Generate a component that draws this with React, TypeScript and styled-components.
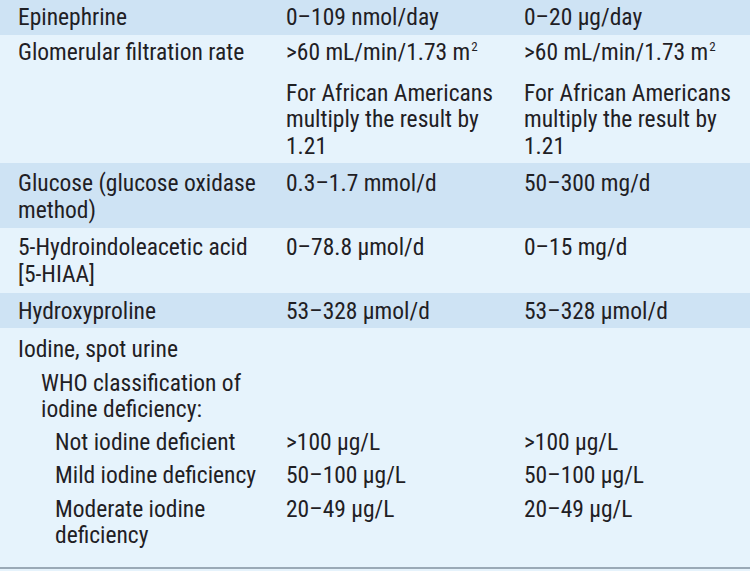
import React from "react";
import styled, { createGlobalStyle } from "styled-components";

const Global = createGlobalStyle`
  html, body { margin: 0; padding: 0; background: #e6f3fc; }
  body {
    font-family: "Roboto Condensed", Roboto, "Liberation Sans", sans-serif;
    font-stretch: 75%;
    color: #1f2024;
  }
`;

const Table = styled.div`
  width: 750px;
  height: 571px;
  display: flex;
  flex-direction: column;
  background: #e6f3fc;
  font-size: 23.5px;
  line-height: 26.5px;
  overflow: hidden;
`;

const Row = styled.div<{ $shade?: boolean; $h: number; $pt?: number }>`
  display: flex;
  flex-direction: column;
  height: ${(p) => p.$h}px;
  flex: none;
  box-sizing: border-box;
  padding: ${(p) => p.$pt ?? 4}px 0 0 18px;
  background: ${(p) => (p.$shade ? "#cee3f4" : "#e6f3fc")};
`;

const Line = styled.div<{ $gap?: number; $indent?: number }>`
  display: grid;
  grid-template-columns: ${(p) => 268 - (p.$indent ?? 0)}px 238px 1fr;
  padding-left: ${(p) => p.$indent ?? 0}px;
  margin-top: ${(p) => p.$gap ?? 0}px;
`;

const Cell = styled.div`
  white-space: pre-line;
`;

const Sup = styled.sup`
  font-size: 13px;
  line-height: 0;
  vertical-align: 9px;
  margin-left: 1px;
`;

const Bottom = styled.div`
  height: 2px;
  background: #9aa9b6;
  flex: none;
`;

const M2 = () => (
  <>
    &gt;60 mL/min/1.73 m<Sup>2</Sup>
  </>
);

export default function App() {
  const note = "For African Americans\nmultiply the result by\n1.21";
  return (
    <>
      <Global />
      <Table>
        <Row $shade $h={35}>
          <Line>
            <Cell>Epinephrine</Cell>
            <Cell>0–109 nmol/day</Cell>
            <Cell>0–20 µg/day</Cell>
          </Line>
        </Row>
        <Row $h={128}>
          <Line>
            <Cell>Glomerular filtration rate</Cell>
            <Cell><M2 /></Cell>
            <Cell><M2 /></Cell>
          </Line>
          <Line $gap={14}>
            <Cell />
            <Cell>{note}</Cell>
            <Cell>{note}</Cell>
          </Line>
        </Row>
        <Row $shade $h={65} $pt={7}>
          <Line>
            <Cell>{"Glucose (glucose oxidase\nmethod)"}</Cell>
            <Cell>0.3–1.7 mmol/d</Cell>
            <Cell>50–300 mg/d</Cell>
          </Line>
        </Row>
        <Row $h={65} $pt={6}>
          <Line>
            <Cell>{"5-Hydroindoleacetic acid\n[5-HIAA]"}</Cell>
            <Cell>0–78.8 µmol/d</Cell>
            <Cell>0–15 mg/d</Cell>
          </Line>
        </Row>
        <Row $shade $h={35} $pt={5}>
          <Line>
            <Cell>Hydroxyproline</Cell>
            <Cell>53–328 µmol/d</Cell>
            <Cell>53–328 µmol/d</Cell>
          </Line>
        </Row>
        <Row $h={239} $pt={8}>
          <Line>
            <Cell>Iodine, spot urine</Cell>
          </Line>
          <Line $indent={23} $gap={7}>
            <Cell>{"WHO classification of\niodine deficiency:"}</Cell>
          </Line>
          <Line $indent={37} $gap={6}>
            <Cell>Not iodine deficient</Cell>
            <Cell>&gt;100 µg/L</Cell>
            <Cell>&gt;100 µg/L</Cell>
          </Line>
          <Line $indent={37} $gap={7}>
            <Cell>Mild iodine deficiency</Cell>
            <Cell>50–100 µg/L</Cell>
            <Cell>50–100 µg/L</Cell>
          </Line>
          <Line $indent={37} $gap={7}>
            <Cell>{"Moderate iodine\ndeficiency"}</Cell>
            <Cell>20–49 µg/L</Cell>
            <Cell>20–49 µg/L</Cell>
          </Line>
        </Row>
        <Bottom />
      </Table>
    </>
  );
}
